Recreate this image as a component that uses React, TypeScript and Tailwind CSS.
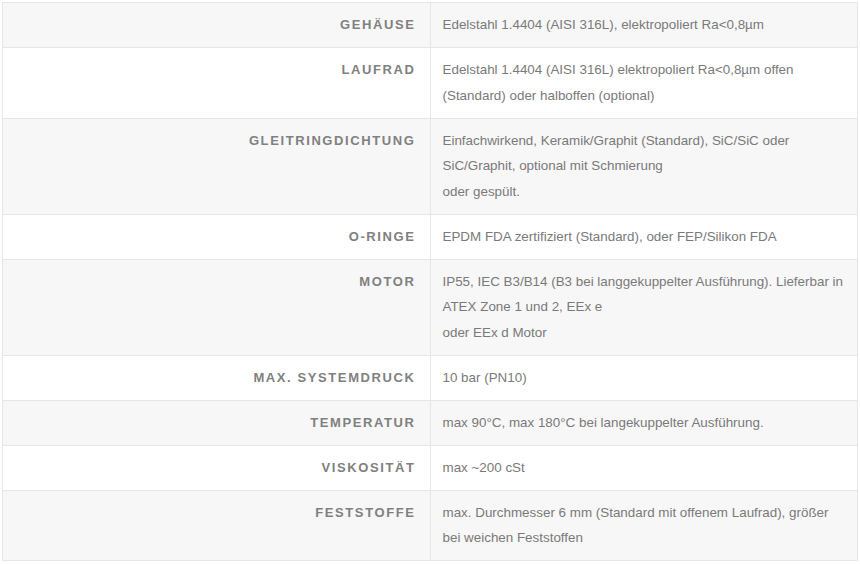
import React from "react";

const rows: { label: string; lines: string[] }[] = [
  { label: "Gehäuse", lines: ["Edelstahl 1.4404 (AISI 316L), elektropoliert Ra<0,8µm"] },
  { label: "Laufrad", lines: ["Edelstahl 1.4404 (AISI 316L) elektropoliert Ra<0,8µm offen (Standard) oder halboffen (optional)"] },
  { label: "Gleitringdichtung", lines: ["Einfachwirkend, Keramik/Graphit (Standard), SiC/SiC oder SiC/Graphit, optional mit Schmierung", "oder gespült."] },
  { label: "O-Ringe", lines: ["EPDM FDA zertifiziert (Standard), oder FEP/Silikon FDA"] },
  { label: "Motor", lines: ["IP55, IEC B3/B14 (B3 bei langgekuppelter Ausführung). Lieferbar in ATEX Zone 1 und 2, EEx e", "oder EEx d Motor"] },
  { label: "Max. Systemdruck", lines: ["10 bar (PN10)"] },
  { label: "Temperatur", lines: ["max 90°C, max 180°C bei langekuppelter Ausführung."] },
  { label: "Viskosität", lines: ["max ~200 cSt"] },
  { label: "Feststoffe", lines: ["max. Durchmesser 6 mm (Standard mit offenem Laufrad), größer bei weichen Feststoffen"] },
];

export default function App() {
  return (
    <div className="w-[860px] h-[564px] bg-white pl-[2px] pt-[2px] pr-[2px]" style={{ fontFamily: '"Liberation Sans", Arial, sans-serif' }}>
      <table className="w-[856px] border-collapse border border-[#e6e6e6] table-fixed">
        <tbody>
          {rows.map((r, i) => (
            <tr key={r.label} className={i % 2 === 0 ? "bg-[#f7f7f7]" : "bg-white"}>
              <td className="w-1/2 border border-[#e6e6e6] text-right align-top pr-[14px] pl-3 py-[9.25px] text-[13px] leading-[25.5px] font-bold uppercase tracking-[1.6px] text-[#808080]">
                {r.label}
              </td>
              <td className="w-1/2 border border-[#e6e6e6] align-top pl-3 pr-3 py-[9.25px] text-[13.4px] leading-[25.5px] text-[#7a7a7a]">
                {r.lines.map((l, j) => (
                  <div key={j}>{l}</div>
                ))}
              </td>
            </tr>
          ))}
        </tbody>
      </table>
    </div>
  );
}
